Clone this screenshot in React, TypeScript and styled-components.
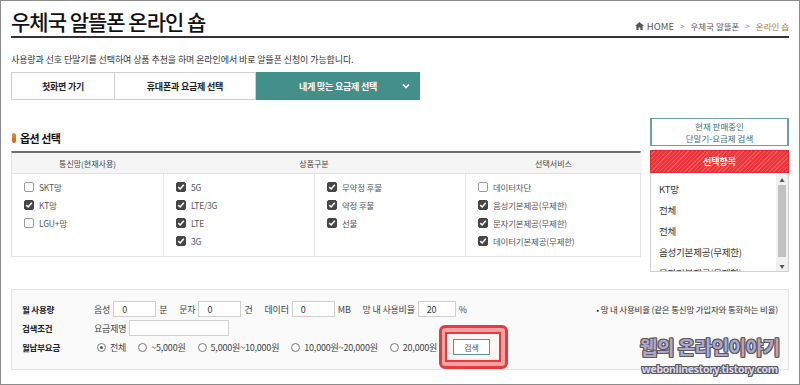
import React from 'react'
import styled, { createGlobalStyle } from 'styled-components'

const GlobalStyle = createGlobalStyle`
  html, body {
    margin: 0;
    padding: 0;
    background: #fff;
  }
  body {
    font-family: "Noto Sans CJK KR", "Noto Sans", sans-serif;
    color: #333;
  }
  * {
    box-sizing: border-box;
  }
`

const Page = styled.div`
  position: relative;
  width: 800px;
  height: 385px;
  border: 1px solid #8c8c8c;
  padding: 0 10px;
  overflow: hidden;
  background: #fff;
`

const Header = styled.header`
  display: flex;
  justify-content: space-between;
  align-items: flex-end;
  height: 37px;
  border-bottom: 2px solid #333;
  padding-bottom: 3px;
`

const Title = styled.h1`
  margin: 0;
  font-size: 21px;
  font-weight: 500;
  line-height: 24px;
  letter-spacing: -1px;
  color: #111;
`

const Crumbs = styled.nav`
  display: flex;
  align-items: center;
  gap: 6px;
  font-size: 8.5px;
  line-height: 14px;
  color: #555;
`

const Crumb = styled.span<{ $current?: boolean }>`
  color: ${(p) => (p.$current ? '#9b7a43' : '#555')};
  display: flex;
  align-items: center;
  gap: 3px;
`

const HomeText = styled.span`
  font-size: 9.5px;
`

const Sep = styled.span`
  color: #777;
  font-size: 8px;
`

const Desc = styled.p`
  margin: 14px 0 0;
  font-size: 9px;
  line-height: 16px;
  letter-spacing: -0.1px;
  color: #333;
`

const Tabs = styled.div`
  display: flex;
  margin-top: 4px;
  height: 28px;
`

const Tab = styled.div<{ $w: number; $active?: boolean }>`
  width: ${(p) => p.$w}px;
  display: grid;
  grid-template-columns: 1fr auto 1fr;
  align-items: center;
  border: 1px solid ${(p) => (p.$active ? '#43908a' : '#cfcfcf')};
  border-left-width: ${(p) => (p.$active ? 1 : 0)}px;
  background: ${(p) => (p.$active ? '#43908a' : '#fff')};
  color: ${(p) => (p.$active ? '#fff' : '#222')};
  font-size: 9px;
  font-weight: 700;
  letter-spacing: -0.2px;

  &:first-child {
    border-left-width: 1px;
  }
`

const TabLabel = styled.span`
  grid-column: 2;
`

const Chevron = styled.span`
  grid-column: 3;
  justify-self: end;
  margin-right: 9px;
  display: flex;
`

const Middle = styled.div`
  display: flex;
  align-items: flex-start;
  gap: 9px;
  margin-top: 18px;
`

const OptionCol = styled.section`
  width: 630px;
  padding-top: 11px;
`

const SectionTitle = styled.h2`
  display: flex;
  align-items: center;
  gap: 4px;
  margin: 0 0 4px 1px;
  font-size: 11px;
  line-height: 18px;
  font-weight: 700;
  letter-spacing: -0.5px;
  color: #111;

  &::before {
    content: '';
    width: 4px;
    height: 10px;
    border-radius: 2px;
    background: linear-gradient(#f08a3c, #d2601a);
  }
`

const OptTable = styled.div`
  display: grid;
  grid-template-columns: 151px 151px 151px 177px;
  border-top: 2px solid #6e6e6e;
  border-left: 1px solid #e2e2e2;
  border-right: 1px solid #e2e2e2;
  border-bottom: 1px solid #e2e2e2;
`

const HeadCell = styled.div<{ $span?: number }>`
  position: relative;
  grid-column: span ${(p) => p.$span ?? 1};
  height: 21px;
  display: flex;
  align-items: center;
  justify-content: center;
  background: #f5f5f5;
  border-bottom: 1px solid #e2e2e2;
  font-size: 8px;
  color: #444;

  & + &::before {
    content: '';
    position: absolute;
    left: 0;
    top: 0;
    width: 1px;
    height: 5px;
    background: #aaa;
  }
`

const BodyCell = styled.div`
  padding: 4px 0 6px 12px;
  border-left: 1px solid #e6e6e6;

  &:nth-child(4) {
    border-left: none;
  }
`

const CheckRow = styled.label`
  display: flex;
  align-items: center;
  gap: 5px;
  height: 18px;
  font-size: 8.5px;
  color: #555;
  letter-spacing: -0.2px;
`

const Box = styled.span<{ $on: boolean }>`
  width: 10px;
  height: 10px;
  border-radius: 2px;
  display: flex;
  align-items: center;
  justify-content: center;
  border: 1px solid ${(p) => (p.$on ? '#444' : '#9a9a9a')};
  background: ${(p) => (p.$on ? '#474747' : '#fff')};
`

const SideCol = styled.aside`
  width: 140px;
  display: flex;
  flex-direction: column;
`

const SideButton = styled.div`
  height: 28px;
  border: 1px solid #6aa39e;
  border-width: 1px 2px;
  display: flex;
  flex-direction: column;
  align-items: center;
  justify-content: center;
  font-size: 8.5px;
  line-height: 12px;
  color: #3f6f6a;
`

const SelHeader = styled.div`
  margin-top: 4px;
  height: 23px;
  display: flex;
  align-items: center;
  justify-content: center;
  background: repeating-linear-gradient(135deg, #e9353b 0 2px, #f4555a 2px 3px);
  color: #fff;
  font-size: 9px;
  font-weight: 700;
  border: 1px solid #d92e34;
`

const SelList = styled.div`
  height: 99px;
  display: flex;
  border: 1px solid #cfcfcf;
  border-top: none;
  overflow: hidden;
`

const SelItems = styled.ul`
  flex: 1;
  margin: 0;
  padding: 6px 0 0 8px;
  list-style: none;
`

const SelItem = styled.li`
  line-height: 21px;
  font-size: 9.5px;
  color: #333;
  white-space: nowrap;
  letter-spacing: -0.2px;
`

const Track = styled.div`
  width: 12px;
  background: #f1f1f1;
  display: flex;
  flex-direction: column;
  align-items: center;
`

const Arrow = styled.span`
  height: 12px;
  display: flex;
  align-items: center;
  font-size: 5px;
  color: #555;
`

const Thumb = styled.div`
  width: 8px;
  height: 72px;
  background: #c1c1c1;
  margin-bottom: auto;
`

const FormBox = styled.div`
  margin-top: 17px;
  height: 81px;
  border: 1px solid #e4e4e4;
  background: #fafafa;
  padding: 11px 10px 0 10px;
  display: flex;
  flex-direction: column;
  gap: 3px;
`

const FormRow = styled.div`
  display: flex;
  align-items: center;
  height: 16px;
  font-size: 9px;
  color: #444;
  letter-spacing: -0.2px;
`

const RowLabel = styled.span`
  width: 72px;
  font-size: 8.5px;
  font-weight: 700;
  color: #222;
`

const Group = styled.span`
  display: flex;
  align-items: center;
  gap: 3px;
  margin-right: 12px;
`

const TextInput = styled.span<{ $w: number }>`
  width: ${(p) => p.$w}px;
  height: 16px;
  border: 1px solid #cfcfcf;
  background: #fff;
  padding-left: 8px;
  display: flex;
  align-items: center;
  color: #333;
`

const Note = styled.span`
  margin-left: auto;
  font-size: 8.5px;
  color: #333;
`

const RadioOpt = styled.span`
  display: flex;
  align-items: center;
  gap: 4px;
  margin-right: 9px;
  margin-left: 3px;
`

const Radio = styled.span<{ $on: boolean }>`
  width: 9px;
  height: 9px;
  border-radius: 50%;
  border: 1px solid #777;
  background: #fff;
  display: flex;
  align-items: center;
  justify-content: center;

  &::after {
    content: '';
    width: 3px;
    height: 3px;
    border-radius: 50%;
    background: ${(p) => (p.$on ? '#555' : 'transparent')};
  }
`

const Highlight = styled.span`
  position: relative;
  margin-left: 7px;
  display: flex;
`

const HighlightOuter = styled.span`
  position: absolute;
  top: -14px;
  bottom: -14px;
  left: -14px;
  right: -18px;
  border: 3px solid #e23b40;
  border-radius: 6px;
  background: #f4a3a5;
`

const HighlightInner = styled.span`
  position: absolute;
  top: -7px;
  bottom: -7px;
  left: -8px;
  right: -11px;
  border: 2px solid #e23b40;
  background: #fff4f4;
`

const SearchButton = styled.button`
  position: relative;
  width: 37px;
  height: 16px;
  padding: 0;
  border: 1px solid #5b9590;
  background: #fff;
  font-family: inherit;
  font-size: 8px;
  color: #555;
`

const Watermark = styled.div`
  position: absolute;
  left: 639px;
  top: 334px;
  display: flex;
  flex-direction: column;
  align-items: center;
  font-weight: 700;
  pointer-events: none;
  text-shadow:
    1px 0 0 #5a5a5a, -1px 0 0 #5a5a5a, 0 1px 0 #5a5a5a, 0 -1px 0 #5a5a5a,
    1px 1px 0 #5a5a5a, -1px -1px 0 #5a5a5a, 1px -1px 0 #5a5a5a, -1px 1px 0 #5a5a5a,
    2px 2px 0 #fff, -2px -2px 0 #fff, 2px -2px 0 #fff, -2px 2px 0 #fff;
`

const MarkTitle = styled.span`
  font-size: 19px;
  line-height: 24px;
  letter-spacing: -0.5px;
  color: #aea6d2;
`

const MarkUrl = styled.span`
  font-family: "Noto Sans", sans-serif;
  font-size: 10.5px;
  line-height: 14px;
  letter-spacing: -0.3px;
  margin-top: 3px;
  color: #dcd8ee;
`

const HomeIcon = () => (
  <svg width="9" height="8" viewBox="0 0 9 8">
    <path d="M4.5 0 L9 4 L7.6 4 L7.6 8 L5.4 8 L5.4 5.5 L3.6 5.5 L3.6 8 L1.4 8 L1.4 4 L0 4 Z" fill="#555" />
  </svg>
)

const ChevronDown = () => (
  <svg width="8" height="6" viewBox="0 0 8 6">
    <path d="M1 1.5 L4 4.5 L7 1.5" fill="none" stroke="#fff" strokeWidth="1.6" />
  </svg>
)

const Tick = () => (
  <svg width="8" height="8" viewBox="0 0 8 8">
    <path d="M1.3 4.1 L3.2 6 L6.8 1.8" fill="none" stroke="#fff" strokeWidth="1.5" />
  </svg>
)

const Check = ({ label, on }: { label: string; on: boolean }) => (
  <CheckRow>
    <Box $on={on}>{on && <Tick />}</Box>
    {label}
  </CheckRow>
)

const networks = [
  { label: 'SKT망', on: false },
  { label: 'KT망', on: true },
  { label: 'LGU+망', on: false },
]
const generations = ['5G', 'LTE/3G', 'LTE', '3G']
const plans = ['무약정 후불', '약정 후불', '선불']
const services = [
  { label: '데이터차단', on: false },
  { label: '음성기본제공(무제한)', on: true },
  { label: '문자기본제공(무제한)', on: true },
  { label: '데이터기본제공(무제한)', on: true },
]
const selected = ['KT망', '전체', '전체', '음성기본제공(무제한)', '문자기본제공(무제한)']
const fees = ['전체', '~5,000원', '5,000원~10,000원', '10,000원~20,000원', '20,000원']

const App = () => (
  <Page>
    <GlobalStyle />
    <Header>
      <Title>우체국 알뜰폰 온라인 숍</Title>
      <Crumbs>
        <Crumb>
          <HomeIcon />
          <HomeText>HOME</HomeText>
        </Crumb>
        <Sep>&gt;</Sep>
        <Crumb>우체국 알뜰폰</Crumb>
        <Sep>&gt;</Sep>
        <Crumb $current>온라인 숍</Crumb>
      </Crumbs>
    </Header>

    <Desc>사용량과 선호 단말기를 선택하여 상품 추천을 하며 온라인에서 바로 알뜰폰 신청이 가능합니다.</Desc>

    <Tabs>
      <Tab $w={104}>
        <TabLabel>첫화면 가기</TabLabel>
      </Tab>
      <Tab $w={141}>
        <TabLabel>휴대폰과 요금제 선택</TabLabel>
      </Tab>
      <Tab $w={164} $active>
        <TabLabel>내게 맞는 요금제 선택</TabLabel>
        <Chevron>
          <ChevronDown />
        </Chevron>
      </Tab>
    </Tabs>

    <Middle>
      <OptionCol>
        <SectionTitle>옵션 선택</SectionTitle>
        <OptTable>
          <HeadCell>통신망(현재사용)</HeadCell>
          <HeadCell $span={2}>상품구분</HeadCell>
          <HeadCell>선택서비스</HeadCell>
          <BodyCell>
            {networks.map((n) => (
              <Check key={n.label} label={n.label} on={n.on} />
            ))}
          </BodyCell>
          <BodyCell>
            {generations.map((g) => (
              <Check key={g} label={g} on />
            ))}
          </BodyCell>
          <BodyCell>
            {plans.map((p) => (
              <Check key={p} label={p} on />
            ))}
          </BodyCell>
          <BodyCell>
            {services.map((s) => (
              <Check key={s.label} label={s.label} on={s.on} />
            ))}
          </BodyCell>
        </OptTable>
      </OptionCol>

      <SideCol>
        <SideButton>
          <span>현재 판매중인</span>
          <span>단말기-요금제 검색</span>
        </SideButton>
        <SelHeader>선택항목</SelHeader>
        <SelList>
          <SelItems>
            {selected.map((s, i) => (
              <SelItem key={i}>{s}</SelItem>
            ))}
          </SelItems>
          <Track>
            <Arrow>▲</Arrow>
            <Thumb />
            <Arrow>▼</Arrow>
          </Track>
        </SelList>
      </SideCol>
    </Middle>

    <FormBox>
      <FormRow>
        <RowLabel>월 사용량</RowLabel>
        <Group>
          음성 <TextInput $w={43}>0</TextInput> 분
        </Group>
        <Group>
          문자 <TextInput $w={43}>0</TextInput> 건
        </Group>
        <Group>
          데이터 <TextInput $w={43}>0</TextInput> MB
        </Group>
        <Group>
          망 내 사용비율 <TextInput $w={38}>20</TextInput> %
        </Group>
        <Note>• 망 내 사용비율 (같은 통신망 가입자와 통화하는 비율)</Note>
      </FormRow>
      <FormRow>
        <RowLabel>검색조건</RowLabel>
        <Group>
          요금제명 <TextInput $w={100} />
        </Group>
      </FormRow>
      <FormRow>
        <RowLabel>월납부요금</RowLabel>
        {fees.map((f, i) => (
          <RadioOpt key={f}>
            <Radio $on={i === 0} />
            {f}
          </RadioOpt>
        ))}
        <Highlight>
          <HighlightOuter />
          <HighlightInner />
          <SearchButton>검색</SearchButton>
        </Highlight>
      </FormRow>
    </FormBox>

    <Watermark>
      <MarkTitle>웹의 온라인이야기</MarkTitle>
      <MarkUrl>webonlinestory.tistory.com</MarkUrl>
    </Watermark>
  </Page>
)

export default App
